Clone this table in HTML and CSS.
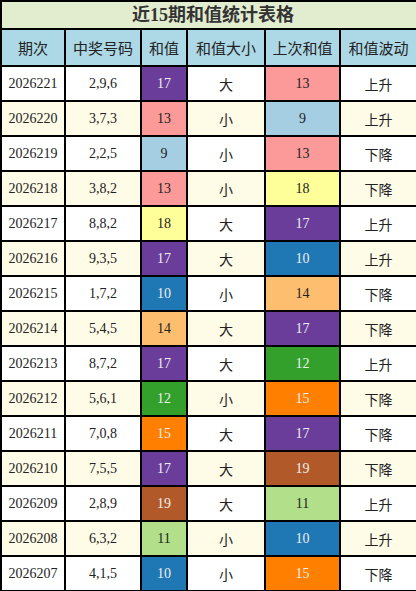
FILE: index.html
```html
<!DOCTYPE html>
<html lang="zh">
<head>
  <meta charset="UTF-8">
  <meta name="viewport" content="width=device-width, initial-scale=1.0">
  <title>近15期和值统计表格</title>
  <link rel="stylesheet" href="styles.css">
</head>
<body>
  <table class="stats">
    <colgroup>
      <col class="c-issue">
      <col class="c-nums">
      <col class="c-sum">
      <col class="c-size">
      <col class="c-prev">
      <col class="c-trend">
    </colgroup>
    <thead>
      <tr class="title-row"><th colspan="6">近15期和值统计表格</th></tr>
      <tr class="head-row">
        <th>期次</th><th>中奖号码</th><th>和值</th><th>和值大小</th><th>上次和值</th><th>和值波动</th>
      </tr>
    </thead>
    <tbody>
      <tr><td>2026221</td><td>2,9,6</td><td class="s17">17</td><td class="zh">大</td><td class="s13">13</td><td class="zh">上升</td></tr>
      <tr><td>2026220</td><td>3,7,3</td><td class="s13">13</td><td class="zh">小</td><td class="s9">9</td><td class="zh">上升</td></tr>
      <tr><td>2026219</td><td>2,2,5</td><td class="s9">9</td><td class="zh">小</td><td class="s13">13</td><td class="zh">下降</td></tr>
      <tr><td>2026218</td><td>3,8,2</td><td class="s13">13</td><td class="zh">小</td><td class="s18">18</td><td class="zh">下降</td></tr>
      <tr><td>2026217</td><td>8,8,2</td><td class="s18">18</td><td class="zh">大</td><td class="s17">17</td><td class="zh">上升</td></tr>
      <tr><td>2026216</td><td>9,3,5</td><td class="s17">17</td><td class="zh">大</td><td class="s10">10</td><td class="zh">上升</td></tr>
      <tr><td>2026215</td><td>1,7,2</td><td class="s10">10</td><td class="zh">小</td><td class="s14">14</td><td class="zh">下降</td></tr>
      <tr><td>2026214</td><td>5,4,5</td><td class="s14">14</td><td class="zh">大</td><td class="s17">17</td><td class="zh">下降</td></tr>
      <tr><td>2026213</td><td>8,7,2</td><td class="s17">17</td><td class="zh">大</td><td class="s12">12</td><td class="zh">上升</td></tr>
      <tr><td>2026212</td><td>5,6,1</td><td class="s12">12</td><td class="zh">小</td><td class="s15">15</td><td class="zh">下降</td></tr>
      <tr><td>2026211</td><td>7,0,8</td><td class="s15">15</td><td class="zh">大</td><td class="s17">17</td><td class="zh">下降</td></tr>
      <tr><td>2026210</td><td>7,5,5</td><td class="s17">17</td><td class="zh">大</td><td class="s19">19</td><td class="zh">下降</td></tr>
      <tr><td>2026209</td><td>2,8,9</td><td class="s19">19</td><td class="zh">大</td><td class="s11">11</td><td class="zh">上升</td></tr>
      <tr><td>2026208</td><td>6,3,2</td><td class="s11">11</td><td class="zh">小</td><td class="s10">10</td><td class="zh">上升</td></tr>
      <tr><td>2026207</td><td>4,1,5</td><td class="s10">10</td><td class="zh">小</td><td class="s15">15</td><td class="zh">下降</td></tr>
    </tbody>
  </table>
</body>
</html>
```

FILE: styles.css
```css
* {
  box-sizing: border-box;
  margin: 0;
  padding: 0;
}

body {
  font-family: 'Liberation Serif', 'Noto Sans CJK SC', serif;
  background-color: #fff;
  color: #222;
}

.stats {
  width: 416px;
  border-collapse: collapse;
  table-layout: fixed;
}

.c-issue { width: 64px; }
.c-nums  { width: 76px; }
.c-sum   { width: 46px; }
.c-size  { width: 78px; }
.c-prev  { width: 75px; }
.c-trend { width: 77px; }

.stats th,
.stats td {
  border: 2px solid #000;
  text-align: center;
  vertical-align: middle;
}

.title-row th {
  height: 28px;
  background-color: #e2eccf;
  color: #333;
  font-family: 'Liberation Serif', 'Noto Sans CJK SC', serif;
  font-size: 18px;
  font-weight: bold;
  line-height: 22px;
  padding-left: 8px;
}

.head-row th {
  height: 37px;
  background-color: #add8e6;
  font-family: 'Noto Sans CJK SC', sans-serif;
  font-size: 15px;
  font-weight: normal;
  color: #222;
}

.stats td {
  height: 35px;
  font-size: 14px;
  line-height: 18px;
}

.stats tbody tr:nth-child(odd) { background-color: #fff; }
.stats tbody tr:nth-child(even) { background-color: #fefbe7; }

.stats td.zh {
  font-family: 'Noto Sans CJK SC', sans-serif;
  font-size: 14px;
}

/* 和值颜色 */
.s9  { background-color: #a6cee3; }
.s10 { background-color: #1f78b4; color: #eee; }
.s11 { background-color: #b2df8a; }
.s12 { background-color: #33a02c; color: #eee; }
.s13 { background-color: #fb9a99; }
.s14 { background-color: #fdbf6f; }
.s15 { background-color: #ff7f00; color: #eee; }
.s17 { background-color: #6a3d9a; color: #eee; }
.s18 { background-color: #ffff99; }
.s19 { background-color: #b15928; color: #eee; }
```
